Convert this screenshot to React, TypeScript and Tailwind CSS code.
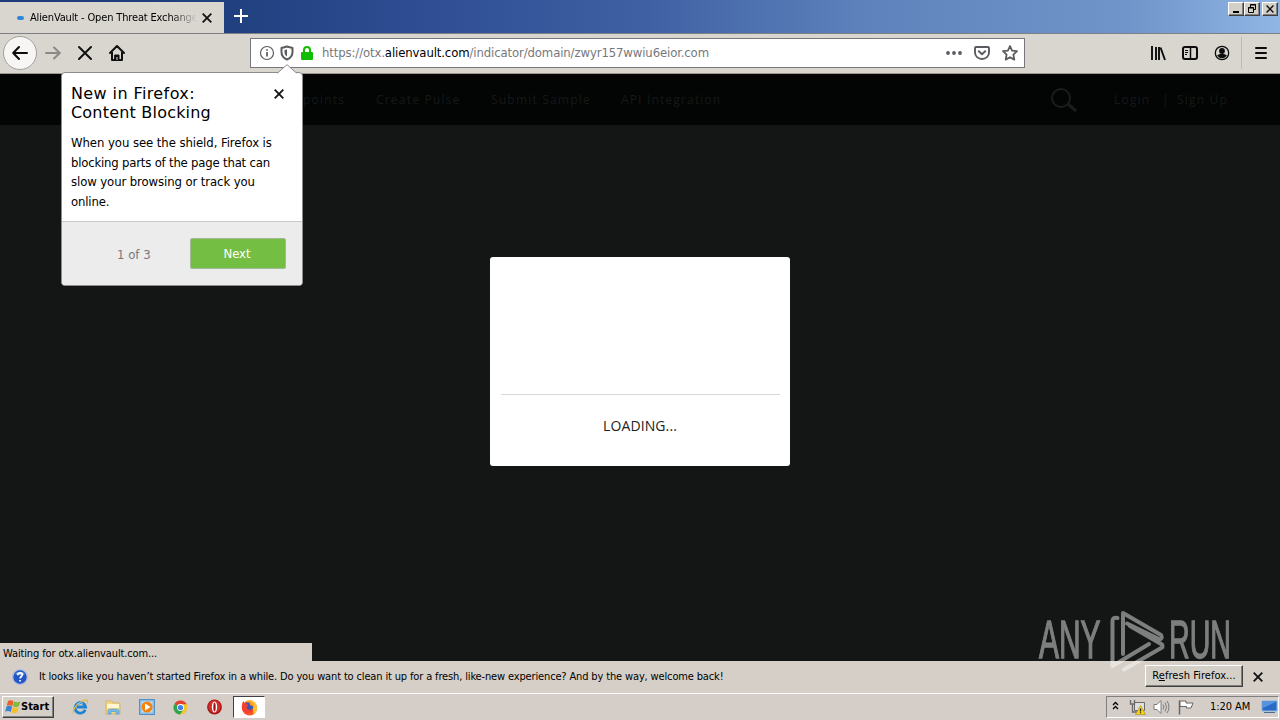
import React from "react";

const ui = "font-['DejaVu_Sans_Condensed','DejaVu_Sans',sans-serif] [font-stretch:condensed]";

const raised =
  "bg-[#d4d0c8] border border-t-white border-l-white border-r-[#404040] border-b-[#404040] shadow-[inset_-1px_-1px_0_#808080]";

function CloseIcon({ size = 10, width = 1.8 }: { size?: number; width?: number }) {
  return (
    <svg width={size} height={size} viewBox="0 0 10 10" stroke="#111" strokeWidth={width} fill="none">
      <path d="M0.7 0.7 9.3 9.3M9.3 0.7 0.7 9.3" />
    </svg>
  );
}

function TitleBar() {
  return (
    <div className="flex h-[33px] shrink-0 items-start bg-[linear-gradient(90deg,#1f3a7c_0px,#20407f_230px,#2e4d93_420px,#4061a4_650px,#5f84bd_880px,#6f95ca_1130px,#8fb6e4_1280px)]">
      <div className="mt-[2px] flex h-[31px] w-[224px] items-center bg-[#d9d6d0] pl-[17px]">
        <span className="h-[4px] w-[7px] rounded-full bg-[#2f86dd]" />
        <span className={`${ui} ml-[6px] h-[16px] w-[166px] overflow-hidden text-[11px] leading-[16px] tracking-[-0.15px] whitespace-nowrap text-black [mask-image:linear-gradient(90deg,#000_140px,transparent_167px)]`}>
          AlienVault - Open Threat Exchange
        </span>
        <span className="ml-[6px]">
          <CloseIcon />
        </span>
      </div>
      <svg className="mt-[9px] ml-[10px]" width="14" height="14" viewBox="0 0 14 14" stroke="#fff" strokeWidth="2">
        <path d="M7 0v14M0 7h14" />
      </svg>
      <div className="mt-[2px] mr-[2px] ml-auto flex">
        <span className={`${raised} flex h-[14px] w-[16px] justify-center`}>
          <svg width="12" height="12" stroke="#000" strokeWidth="2">
            <path d="M3 9h6" />
          </svg>
        </span>
        <span className={`${raised} flex h-[14px] w-[16px] justify-center`}>
          <svg width="12" height="12" stroke="#000" fill="none">
            <path d="M4.500 4V1.500h5v5H8M4 2h6M2.500 4.500h5v5h-5zM2 5h6" />
          </svg>
        </span>
        <span className={`${raised} ml-[2px] flex h-[14px] w-[16px] items-center justify-center`}>
          <CloseIcon size={8} />
        </span>
      </div>
    </div>
  );
}

function NavBar() {
  return (
    <div className="flex h-[41px] shrink-0 items-center border-t border-b border-t-[#7e8085] border-b-[#9b9893] bg-[#d9d6d0] pb-px pl-[3px]">
      <span className="flex size-[34px] items-center justify-center rounded-full border border-[#a3a19d] bg-[#f7f6f5]">
        <svg width="16" height="16" viewBox="0 0 16 16" fill="none" stroke="#0c0c0d" strokeWidth="2" strokeLinecap="round" strokeLinejoin="round">
          <path d="M15 8H1.500M7 2 1.200 8 7 14" />
        </svg>
      </span>
      <svg className="ml-[8px]" width="16" height="16" viewBox="0 0 16 16" fill="none" stroke="#8b8986" strokeWidth="2" strokeLinecap="round" strokeLinejoin="round">
        <path d="M1 8h13.500M9 2.500 14.800 8 9 13.500" />
      </svg>
      <svg className="ml-[16px]" width="16" height="16" viewBox="0 0 16 16" fill="none" stroke="#111" strokeWidth="2" strokeLinecap="round">
        <path d="M2 2l12 12M14 2 2 14" />
      </svg>
      <svg className="ml-[16px]" width="16" height="16" viewBox="0 0 16 16" fill="none" stroke="#111" strokeWidth="2" strokeLinecap="round" strokeLinejoin="round">
        <path d="M1 8 8 1l7 7M3 7v8h10V7" />
        <path d="M6 10h4v5H6z" fill="#111" strokeWidth="1" />
        <path d="M7.500 12h1v3h-1z" fill="#d9d6d0" stroke="none" />
      </svg>

      <div className="ml-[125px] flex h-[30px] w-[775px] items-center border border-[#77767a] bg-white pl-[8px]">
        <svg width="16" height="16" viewBox="0 0 16 16" fill="none" stroke="#5b5b60">
          <circle cx="8" cy="8" r="6.500" strokeWidth="1.200" />
          <path d="M8 7v4.500M8 4.200v1.600" strokeWidth="1.700" />
        </svg>
        <svg className="ml-[4px]" width="16" height="16" viewBox="0 0 16 16" fill="none" stroke="#5b5b60" strokeWidth="2">
          <path d="M8 1.500 13.500 3v4c0 4-2 6-5.500 7.500C4.500 13 2.500 11 2.500 7V3z" strokeLinejoin="round" />
          <path d="M8 4.500v7C6 10 5.500 9 5.500 7V5z" fill="#5b5b60" stroke="none" />
        </svg>
        <svg className="ml-[4px]" width="16" height="16" viewBox="0 0 16 16">
          <rect x="2" y="7" width="12" height="8" rx="1" fill="#12bc00" />
          <path d="M5 8V5a3 3 0 0 1 6 0v3" fill="none" stroke="#12bc00" strokeWidth="2" />
        </svg>
        <span className={`${ui} ml-[7px] text-[13px] tracking-[-0.12px] whitespace-nowrap text-[#77777b]`}>
          https://otx.<span className="text-black">alienvault.com</span>/indicator/domain/zwyr157wwiu6eior.com
        </span>
        <svg className="ml-auto" width="16" height="16" fill="#5b5b60">
          <circle cx="2" cy="8" r="1.900" />
          <circle cx="8" cy="8" r="1.900" />
          <circle cx="14" cy="8" r="1.900" />
        </svg>
        <svg className="ml-[12px]" width="16" height="16" viewBox="0 0 16 16" fill="none" stroke="#5b5b60" strokeWidth="1.900" strokeLinecap="round" strokeLinejoin="round">
          <path d="M2 2h12c.6 0 1 .4 1 1v4.500a7 6.500 0 0 1-14 0V3c0-.6.400-1 1-1z" />
          <path d="m4.800 6.200 3.200 3 3.200-3" />
        </svg>
        <svg className="mr-[6px] ml-[12px]" width="16" height="16" viewBox="0 0 16 16" fill="none" stroke="#5b5b60" strokeWidth="1.800" strokeLinejoin="round">
          <path d="m8 1 2.100 4.600 4.900.6-3.600 3.400.9 5L8 12.200l-4.300 2.400.9-5L1 6.200l4.900-.6z" />
        </svg>
      </div>

      <svg className="ml-[125px]" width="16" height="16" viewBox="0 0 16 16" fill="none" stroke="#0c0c0d" strokeWidth="2">
        <path d="M2 1v14M6 2v13M9 2v13M10.500 2.500 15 15" strokeWidth="1.900" />
      </svg>
      <svg className="ml-[16px]" width="16" height="16" viewBox="0 0 16 16" fill="none" stroke="#0c0c0d" strokeWidth="2">
        <rect x="1" y="2" width="14" height="12" rx="2" />
        <path d="M8.500 2v12" strokeWidth="1.500" />
        <path d="M3 5.500h3M3 7.500h3M3 9.500h2" strokeWidth="1" />
      </svg>
      <svg className="ml-[16px]" width="16" height="16" viewBox="0 0 16 16" fill="none" stroke="#0c0c0d">
        <circle cx="8" cy="8" r="6.700" strokeWidth="1.300" />
        <circle cx="8" cy="6" r="2.900" fill="#0c0c0d" stroke="none" />
        <path d="M3.200 10.300c2.200-1.600 7.400-1.600 9.600 0-1 2-2.700 3-4.800 3s-3.800-1-4.800-3z" fill="#0c0c0d" stroke="none" />
      </svg>
      <span className="ml-[11px] h-[32px] w-px bg-[#bdbab5]" />
      <svg className="ml-[11px]" width="16" height="16" stroke="#0c0c0d" strokeWidth="2" strokeLinecap="round">
        <path d="M3 3h10M3 8h10M3 13h10" />
      </svg>
    </div>
  );
}

function SiteHeader() {
  return (
    <div className="flex h-[51px] shrink-0 items-center bg-[#020504] font-['Open_Sans',sans-serif] text-[12px] tracking-[1.2px] whitespace-nowrap text-[#161818]">
      <span className="ml-[303px] w-[73px]">points</span>
      <span className="w-[115px]">Create Pulse</span>
      <span className="w-[130px]">Submit Sample</span>
      <span className="tracking-[1.15px]">API Integration</span>
      <svg className="ml-auto" width="28" height="26" viewBox="0 0 28 26" fill="none" stroke="#1b1d1d" strokeWidth="2">
        <circle cx="11" cy="11" r="9" />
        <path d="m18 17 8 7" strokeWidth="3" />
      </svg>
      <span className="ml-[36px] w-[48px]">Login</span>
      <span className="w-[15px]">|</span>
      <span className="w-[103px]">Sign Up</span>
    </div>
  );
}

function BlockingPopup() {
  return (
    <div className={`${ui} absolute top-[72px] left-[61px] flex h-[214px] w-[242px] flex-col rounded-[4px] border border-[#8c8c8c] bg-white text-black`}>
      <svg className="absolute -top-[9px] left-[214px]" width="22" height="10" viewBox="0 0 22 10">
        <path d="M1 9.500 11 .7l10 8.800" fill="#fff" stroke="#8c8c8c" />
        <path d="M1.500 9.500h19" stroke="#fff" />
      </svg>
      <div className="flex h-[148px] flex-col pt-[11px] pl-[9px]">
        <div className="flex">
          <h1 className="w-[203px] font-['DejaVu_Sans',sans-serif] text-[16px] leading-[19px] tracking-[0.2px] [font-stretch:normal]">
            <span className="tracking-[0.4px]">New in Firefox:</span>
            <br />
            Content Blocking
          </h1>
          <span className="pt-[5px]">
            <CloseIcon />
          </span>
        </div>
        <p className="mt-[11px] text-[13px] leading-[19.700px] tracking-[-0.15px] whitespace-nowrap">
          <span className="tracking-[-0.07px]">When you see the shield, Firefox is</span>
          <br />
          <span className="tracking-[-0.2px]">blocking parts of the page that can</span>
          <br />
          <span className="tracking-[-0.1px]">slow your browsing or track you</span>
          <br />
          online.
        </p>
      </div>
      <div className="flex flex-1 items-center rounded-b-[3px] border-t border-[#c9c9c9] bg-[#ececec] text-[13px]">
        <span className="w-[128px] pt-[2px] pl-[55px] text-[#77777a]">1 of 3</span>
        <button className="h-[31px] w-[96px] rounded-[2px] border border-[#a3b997] bg-[#74bf43] pr-[2px] text-white">Next</button>
      </div>
    </div>
  );
}

function PageBody() {
  return (
    <div className="flex flex-1 flex-col items-center bg-[#131615]">
      <div className="mt-[132px] flex h-[209px] w-[300px] flex-col items-center rounded-[3px] bg-white pt-[137px]">
        <div className="h-px w-[279px] bg-[#d8d8d8]" />
        <p className="mt-[21px] font-['Open_Sans',sans-serif] text-[14px] leading-[20px] tracking-[0.1px] text-[#222]">LOADING...</p>
      </div>
    </div>
  );
}

function InfoBar() {
  return (
    <div className={`${ui} flex h-[32px] shrink-0 items-center bg-[#d5cfc8] pl-[12px] text-[11px] text-black`}>
      <svg width="16" height="16" viewBox="0 0 16 16">
        <circle cx="8" cy="8" r="7.300" fill="#2356c5" stroke="#a9bbdf" strokeWidth="1.300" />
        <path d="M3 5a6 5 0 0 1 10 0c-3 2-7 1-10 0z" fill="#7ea5ec" />
        <path d="M5.800 6.200c0-3.200 4.700-3 4.500-.2-.1 1.500-2.200 1.500-2.200 3.400M8.100 11v1.600" fill="none" stroke="#fff" strokeWidth="1.700" />
      </svg>
      <span className="ml-[11px] pt-px tracking-[-0.145px] whitespace-nowrap">
        It looks like you haven’t started Firefox in a while. Do you want to clean it up for a fresh, like-new experience? And by the way, welcome back!
      </span>
      <button className={`${raised} relative z-20 mr-[10px] mb-[2px] ml-auto h-[22px] w-[98px] text-[11px] tracking-[0.05px] whitespace-nowrap`}>
        R<u>e</u>fresh Firefox...
      </button>
      <span className="mr-[17px]">
        <CloseIcon />
      </span>
    </div>
  );
}

function WindowsFlag() {
  return (
    <svg width="16" height="16" viewBox="0 0 16 16">
      <path d="M3 2c2-1.200 4-.8 5.500.2L7.300 7C5.600 6 4 5.900 1.800 6.800z" fill="#e8602c" />
      <path d="M9.100 2.600c1.900 1 4 1 6.200 0l-1.400 4.700c-1.900 1-4 1-6 0z" fill="#7fba3c" />
      <path d="M1.600 7.500c2.200-1 3.900-.8 5.500.2L5.700 13C4 11.900 2.400 11.800.1 12.800z" fill="#3c7fd6" />
      <path d="M7.700 8.100c1.900 1 3.900 1 6 0L12.300 13.400c-2 1-4 1-5.900 0z" fill="#f5c02e" />
    </svg>
  );
}

function TaskBar() {
  return (
    <div className={`${ui} flex h-[27px] shrink-0 items-center border-t border-white bg-[#d5cec8] pl-[2px] text-[11px] text-black`}>
      <button className={`${raised} flex h-[22px] w-[52px] items-center pl-[2px]`}>
        <WindowsFlag />
        <span className="text-[11px] font-bold">Start</span>
      </button>
      <svg className="ml-[18px]" width="17" height="16" viewBox="0 0 17 16" fill="none">
        <path d="M13.300 10.800A5.300 5.300 0 1 1 13.600 8H5" stroke="#1d83d4" strokeWidth="2.800" />
        <path d="M2 14.500C-1 13 5 3 13 1.200c3-.7 3.200 1 2 3.300" stroke="#e6b93c" strokeWidth="1.300" />
        <path d="M5 5a5 5 0 0 1 6-.5" stroke="#7cc5f3" />
      </svg>
      <svg className="ml-[16px]" width="17" height="16" viewBox="0 0 17 16">
        <path d="M1 2h6l1 2h7v11H1z" fill="#f0d787" stroke="#cfae56" strokeWidth=".7" />
        <path d="M2 5h12v4H2z" fill="#fff6cf" />
        <path d="M3 15v-3.500c0-2 11-2 11 0V15h-3v-2.500H6V15z" fill="#79bce8" stroke="#4b91c8" strokeWidth=".6" />
      </svg>
      <svg className="ml-[17px]" width="16" height="16" viewBox="0 0 16 16">
        <rect x=".5" y=".5" width="15" height="15" fill="#89bce6" stroke="#5590c4" />
        <rect x="2.500" y="2.500" width="11" height="11" fill="#c2def3" />
        <circle cx="8" cy="8" r="5.500" fill="#f2830f" />
        <path d="M6 4.500 11.500 8 6 11.500z" fill="#fff" />
      </svg>
      <svg className="ml-[18px]" width="15" height="15" viewBox="0 0 16 16">
        <circle cx="8" cy="8" r="7.500" fill="#f3c62c" />
        <path d="M8 8 1.500 4.200A7.500 7.500 0 0 1 14.600 4.500H8z" fill="#e34133" />
        <path d="M8 8 1.500 4.200A7.500 7.500 0 0 0 7.500 15.500L11 10z" fill="#31a350" />
        <circle cx="8" cy="8" r="3.700" fill="#fff" />
        <circle cx="8" cy="8" r="2.800" fill="#4380e8" />
      </svg>
      <svg className="ml-[19px]" width="15" height="16" viewBox="0 0 15 16">
        <circle cx="7.500" cy="8" r="7.400" fill="#a51414" />
        <circle cx="7.500" cy="7.500" r="6.300" fill="#cf2d27" />
        <ellipse cx="7.500" cy="8" rx="2.700" ry="5.500" fill="#fff" />
        <ellipse cx="7.500" cy="8" rx="1.200" ry="4.600" fill="#a91313" />
      </svg>
      <span className="ml-[11px] flex h-[22px] w-[32px] items-center justify-center border border-t-[#404040] border-r-white border-b-white border-l-[#404040] bg-white">
        <svg width="17" height="17" viewBox="0 0 17 17">
          <circle cx="8.500" cy="9" r="7.500" fill="#f9542a" />
          <path d="M5 2c3-2 8-1 10 3 2 4 1 8.500-3 11 1.500-5-2-10-7-14z" fill="#ffc22e" />
          <circle cx="8" cy="7.500" r="4.300" fill="#3b56b2" />
          <path d="M8 2c3 0 5 2.500 4.500 5.500L9 6z" fill="#ff9d25" />
          <path d="M1 6c0-2 .8-3 1.500-4 .5 2 1.500 2.500 3 3l2 1.500-2 1.700c1 3 4 3 6.500 1.800-1 4-5.500 5-8.500 3S.6 9 1 6z" fill="#f5402f" />
        </svg>
      </span>

      <div className="mr-[1px] ml-auto flex h-[22px] w-[173px] items-center border border-t-[#808080] border-r-white border-b-white border-l-[#808080] pl-[5px]">
        <svg width="8" height="12" fill="none" stroke="#000" strokeWidth="1.300">
          <path d="m1 4 2.500-2.500L6 4M1 8l2.500-2.500L6 8" />
        </svg>
        <svg className="ml-[9px]" width="17" height="16" viewBox="0 0 17 16">
          <path d="M5.500 3.500h10v8h-10z" fill="#dedede" stroke="#6b6b6b" />
          <path d="M1.500 1v4h4V1M3.500 5v8H9" fill="none" stroke="#6b6b6b" strokeWidth="1.300" />
          <path d="m11.500 6.500 5 9h-10z" fill="#f7d51a" stroke="#a18a1d" strokeWidth=".6" />
          <path d="M11.500 9.500v3M11.500 13.300v1" stroke="#222" strokeWidth="1.300" />
        </svg>
        <svg className="ml-[7px]" width="17" height="16" viewBox="0 0 17 16" fill="none" stroke="#7c7c7c">
          <path d="M1 5.500h3l4-4v13l-4-4H1z" fill="#fff" />
          <path d="M10 5.500q1.500 2.500 0 5M12 3.500q3 4.500 0 9M14 2q4 6 0 12" />
        </svg>
        <svg className="ml-[8px]" width="16" height="16" viewBox="0 0 16 16" fill="#fff" stroke="#666">
          <path d="M1.500 1.500v14" strokeWidth="1.500" />
          <path d="M2 2h6v2h7l-2 5H8.500V7.500H2z" />
        </svg>
        <span className="ml-[16px] tracking-[-0.08px] whitespace-nowrap">1:20 AM</span>
        <svg className="ml-auto" width="17" height="14" viewBox="0 0 17 14">
          <path d="M1 1h15v10H1z" fill="#286ac5" stroke="#8cb6e4" />
          <path d="M1.500 1.500h14L2 8z" fill="#5794df" />
          <path d="M3 12.500h11" stroke="#4c6b94" />
        </svg>
      </div>
    </div>
  );
}

function Watermark() {
  return (
    <div className="absolute top-[609px] left-[1039px] z-10 flex h-[64px] w-[192px] justify-between font-['Liberation_Sans',sans-serif] text-[53px] leading-[62px] text-white opacity-45">
      <span className="h-[64px] w-[62px] origin-left scale-x-[0.565] whitespace-nowrap [-webkit-text-stroke:1.300px_white]">ANY</span>
      <svg className="absolute left-[70px]" width="56" height="64" viewBox="0 0 56 64" fill="none" stroke="#fff" strokeWidth="4" strokeLinejoin="round" strokeLinecap="round">
        <path d="M8.500 9q-5-1-5 3v45L40 35" />
        <path d="M14 45V4l38 22q2 3-1 4.500L18 14.500" />
        <path d="M21 17l32 18.500q1 2 0 3L15 60.500" />
      </svg>
      <span className="h-[64px] w-[62px] origin-left scale-x-[0.54] whitespace-nowrap [-webkit-text-stroke:1.300px_white]">RUN</span>
    </div>
  );
}

export default function App() {
  return (
    <div className="relative flex h-[720px] w-[1280px] flex-col overflow-hidden">
      <TitleBar />
      <NavBar />
      <SiteHeader />
      <PageBody />
      <InfoBar />
      <TaskBar />
      <BlockingPopup />
      <div className={`${ui} absolute top-[643px] left-0 h-[19px] w-[312px] bg-[#d5cfc8] pl-[3px] text-[11px] leading-[21px] tracking-[-0.13px] text-black`}>
        Waiting for otx.alienvault.com...
      </div>
      <Watermark />
    </div>
  );
}
